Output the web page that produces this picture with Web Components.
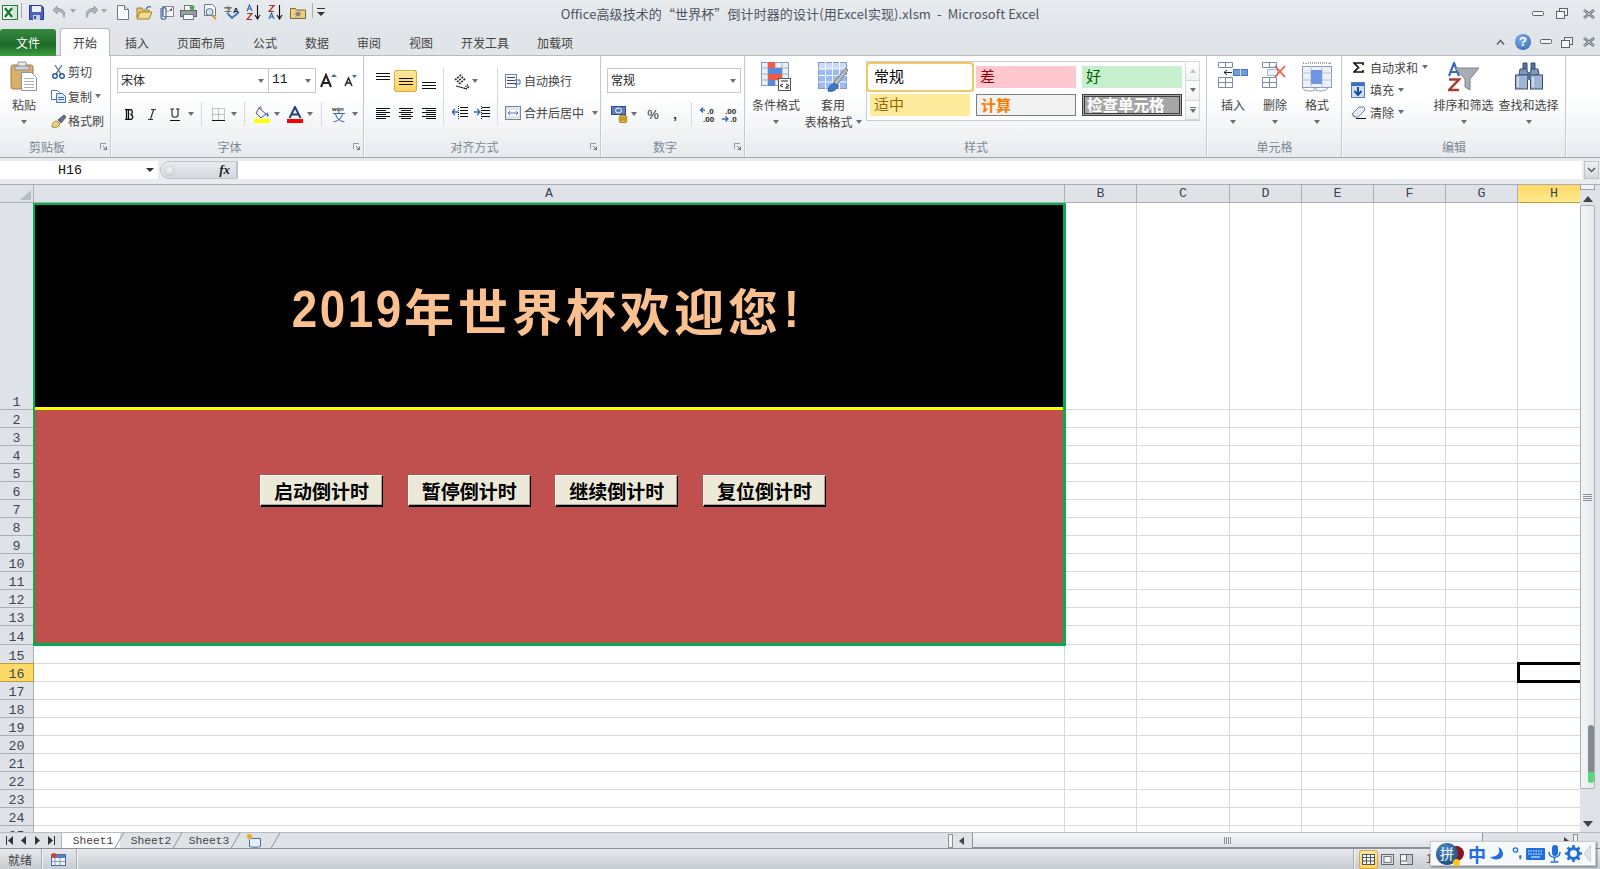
<!DOCTYPE html>
<html lang="zh">
<head>
<meta charset="utf-8">
<title>Microsoft Excel</title>
<style>
  html, body { margin: 0; height: 100%; overflow: hidden; background: #dfe3e8; }
  body { font: 12px "Noto Sans CJK SC", "Liberation Sans", sans-serif; color: #3c4650; display: flex; flex-direction: column; }
</style>
</head>
<body>
<xl-titlebar></xl-titlebar>
<xl-tabs></xl-tabs>
<xl-ribbon></xl-ribbon>
<xl-formula></xl-formula>
<xl-sheet>
  <xl-panel heading="年世界杯欢迎您">
    <xl-button>启动倒计时</xl-button>
    <xl-button>暂停倒计时</xl-button>
    <xl-button>继续倒计时</xl-button>
    <xl-button>复位倒计时</xl-button>
  </xl-panel>
</xl-sheet>
<xl-sheettabs></xl-sheettabs>
<xl-status></xl-status>
<xl-ime></xl-ime>

<script>
const svg = (w, h, body) => `<svg width="${w}" height="${h}" viewBox="0 0 ${w} ${h}" fill="none" style="display:block">${body}</svg>`;
const lines = (x, ys, w, c = "#111") => ys.map((y) => `<path d="M${x} ${y + .5}h${w}" stroke="${c}"/>`).join("");

const ICONS = {
  excel: svg(16, 15, `<rect x=".5" y=".5" width="15" height="14" fill="#f4faf5" stroke="#2b7d3f"/><path d="M10 1h5v13h-5" fill="#cfe8d3"/><path d="M3 3l7 9M10 3l-7 9" stroke="#1d7a35" stroke-width="2.4"/>`),
  save: svg(15, 15, `<path d="M.5.5h12l2 2v12H.5z" fill="#4f62bd" stroke="#2b3a86"/><rect x="3" y="1" width="9" height="6" fill="#eef1fa"/><rect x="4" y="10" width="7" height="5" fill="#c9cfe6"/><rect x="5" y="11" width="2" height="3" fill="#3a4a9a"/>`),
  undo: svg(16, 14, `<path d="M5 1L1 5l4 4V6.5c4 0 6 1 7 6 2-6-1-9-7-9z" fill="#aeb4bb" stroke="#9aa0a8"/>`),
  redo: svg(16, 14, `<path d="M11 1l4 4-4 4V6.5c-4 0-6 1-7 6-2-6 1-9 7-9z" fill="#aeb4bb" stroke="#9aa0a8"/>`),
  doc: svg(12, 15, `<path d="M.5.5h7l4 4v10H.5z" fill="#fbfcfe" stroke="#6d7a8c"/><path d="M7.5.5v4h4" fill="#dbe3ee" stroke="#6d7a8c"/>`),
  open: svg(17, 15, `<path d="M1 3h5l1 2h6v8H1z" fill="#e8c670" stroke="#a17f2e"/><path d="M1 14l3-7h12l-3 7z" fill="#f6dc8f" stroke="#a17f2e"/><path d="M10 4c1-2 3-3 5-2" stroke="#3d7ac4" stroke-width="1.4"/>`),
  mail: svg(17, 16, `<rect x="5.5" y="2.5" width="11" height="10" fill="#f5f7fb" stroke="#7c8aa3"/><path d="M6 3l5 5 5-5" stroke="#9aa6bb"/><rect x="13" y="5" width="2" height="2" fill="#c8433a"/><path d="M4 4v9c0 3 5 3 5 0V5c0-2-3-2-3 0v7" stroke="#4a6a9c" stroke-width="1.2"/>`),
  print: svg(17, 15, `<rect x="4.5" y=".5" width="8" height="5" fill="#fff" stroke="#777"/><rect x=".5" y="5.5" width="16" height="6" fill="#9aa0a8" stroke="#5d636b"/><rect x="3.5" y="9.5" width="10" height="5" fill="#f6f7f9" stroke="#777"/><circle cx="12" cy="2.5" r="2.5" fill="#55a85a"/>`),
  preview: svg(15, 16, `<path d="M1.5.5h8l3 3v8h-11z" fill="#fbfcfe" stroke="#6d7a8c"/><circle cx="6.5" cy="8" r="3.5" fill="#cfe3f5" stroke="#5b6d80"/><path d="M9 11l4 4" stroke="#c99a2e" stroke-width="2"/>`),
  spell: svg(17, 18, `<text x="0" y="9.5" font-size="8" font-family="Noto Sans CJK SC" fill="#222">字</text><text x="9" y="9.5" font-size="8" font-weight="700" font-family="Liberation Sans" fill="#222">A</text><path d="M4 11l4 4 7-6" stroke="#3e76c4" stroke-width="2"/>`),
  sortaz: svg(16, 16, `<path d="M1 7l2.5-6L6 7M2 5h3" stroke="#3c68b0" stroke-width="1.2"/><path d="M1 9.5h5l-5 6h5" stroke="#a4322e" stroke-width="1.2"/><path d="M11.5 1v13M9 11l2.5 4 2.5-4" stroke="#111" stroke-width="1.1"/>`),
  sortza: svg(16, 16, `<path d="M1 1.5h5l-5 6h5" stroke="#a4322e" stroke-width="1.2"/><path d="M1 15l2.5-6L6 15M2 13h3" stroke="#3c68b0" stroke-width="1.2"/><path d="M11.5 1v13M9 11l2.5 4 2.5-4" stroke="#111" stroke-width="1.1"/>`),
  folderstar: svg(16, 13, `<path d="M.5 2.5h5l1 1.5h9v8.5H.5z" fill="#ecd278" stroke="#7a6a3a"/><circle cx="8" cy="8" r="2" fill="#f4a022"/><path d="M8 4.5v7M4.5 8h7M5.5 5.5l5 5M10.5 5.5l-5 5" stroke="#5766b0" stroke-width=".7"/>`),
  customize: svg(8, 8, `<path d="M0 .5h8" stroke="#333"/><path d="M0 4h8L4 8z" fill="#333"/>`),
  paste: svg(28, 31, `<rect x="1" y="4" width="22" height="24" rx="2" fill="#dcae66" stroke="#a57f44"/><rect x="8" y="1" width="8" height="5" rx="1" fill="#e9ecef" stroke="#8a8f96"/><rect x="5" y="5" width="14" height="4" fill="#cfd3d8" stroke="#8a8f96"/><path d="M11.5 11.5h10l5 5v13h-15z" fill="#fff" stroke="#8a95a5"/>${lines(14, [17, 20, 23, 26], 10, "#a9b2bf")}`),
  cut: svg(13, 15, `<path d="M3 1l6 9M10 1L4 10" stroke="#5a6a80" stroke-width="1.3"/><circle cx="3" cy="12" r="2.3" stroke="#2a5db0" stroke-width="1.5"/><circle cx="10" cy="12" r="2.3" stroke="#2a5db0" stroke-width="1.5"/>`),
  copy: svg(15, 13, `<path d="M.5.5h6l2 2v7H.5z" fill="#fff" stroke="#4775b4"/><path d="M5.5 3.5h6l3 3v6h-9z" fill="#dce8f7" stroke="#4775b4"/>${lines(7, [7, 9], 6, "#4775b4")}`),
  brush: svg(16, 14, `<path d="M1 13c0-4 2-6 5-6l3 3c-1 3-4 4-8 3z" fill="#efd07a" stroke="#a58a3c"/><path d="M7 6l6-5 2 2-5 6z" fill="#6b6f87" stroke="#55586b"/>`),
  bold: svg(10, 11, `<path d="M1 .5h5c3 0 3 4.5 .5 5C9.5 6 9.5 10.5 6 10.5H1M2.5 1v9M4.5 1v9" stroke="#111" stroke-width="1.3"/>`),
  italic: svg(10, 11, `<path d="M4 .5h5M1 10.5h5M6.5 1l-3 9" stroke="#333" stroke-width="1.2"/>`),
  under: svg(10, 13, `<path d="M.5 1h3.5M6 1h3.5M2 1v6c0 3 6 3 6 0V1" stroke="#222" stroke-width="1.1"/><path d="M0 12.5h10" stroke="#111"/>`),
  border: svg(13, 13, `<path d="M.5.5h12v12M.5 6.5h12M6.5.5v12M.5.5v12" stroke="#8a8f96" stroke-dasharray="1 1"/><path d="M0 12.5h13" stroke="#111"/>`),
  fill: svg(16, 17, `<path d="M5 2l7 6-5 4-5-5z" fill="#eef2f7" stroke="#556"/><path d="M5 2c1-2 3-1 2 1" stroke="#556"/><path d="M13 6c2 2 2 4 1 5-2-1-2-3-1-5z" fill="#3c68b0"/><rect y="13" width="16" height="4" fill="#ff0"/>`),
  fontcolor: svg(16, 17, `<path d="M2.5 12L8 1l5.5 11M4.5 8.5h7" stroke="#23407e" stroke-width="2"/><rect y="13" width="16" height="4" fill="#f00"/>`),
  wen: svg(16, 18, `<text x="1" y="6" font-size="6" font-weight="700" font-family="Liberation Sans" fill="#333">wén</text><path d="M8 6v2M2 8.5h12M4.5 9c1 5 5 7 9 8M11.5 9c-1 5-5 7-9 8" stroke="#3c68b0" stroke-width="1.1"/>`),
  acup: svg(19, 15, `<path d="M1 14L6 2l5 12M3 10h6" stroke="#222" stroke-width="2"/><path d="M11 4l3-3 3 3z" fill="#3c68b0"/>`),
  acdn: svg(14, 13, `<path d="M1 12l3.5-8L8 12M2.5 9h4" stroke="#222" stroke-width="1.5"/><path d="M8 1h5l-2.5 3z" fill="#3c68b0"/>`),
  at: svg(14, 9, lines(0, [0, 3, 6], 14)),
  am: svg(14, 9, lines(0, [1, 4, 7], 14)),
  ab: svg(14, 9, lines(0, [2, 5, 8], 14)),
  jl: svg(14, 11, lines(0, [0, 4, 8], 14) + lines(0, [2, 6, 10], 10)),
  jc: svg(14, 11, lines(0, [0, 4, 8], 14) + lines(2, [2, 6, 10], 10)),
  jr: svg(14, 11, lines(0, [0, 4, 8], 14) + lines(4, [2, 6, 10], 10)),
  orient: svg(18, 18, `<path d="M2 8l7-6M4 10l7-6M6 12l7-6" stroke="#222" stroke-width="1.6" stroke-dasharray="2 1"/><path d="M3 14l11 3M14 17l-3-1" stroke="#222"/><path d="M12 14l4 2-2-4" stroke="#333"/>`),
  indl: svg(16, 14, lines(8, [1, 4, 7, 10], 8) + `<path d="M0 6h6M3 3L0 6l3 3" stroke="#3c68b0" stroke-width="1.3"/><path d="M6.5 0v14" stroke="#222" stroke-dasharray="1 1"/>`),
  indr: svg(16, 14, lines(8, [1, 4, 7, 10], 8) + `<path d="M0 6h6M3 3l3 3-3 3" stroke="#3c68b0" stroke-width="1.3"/><path d="M7.5 0v14" stroke="#222" stroke-dasharray="1 1"/>`),
  wrap: svg(16, 14, `<rect x=".5" y=".5" width="11" height="13" fill="#f3f5f8" stroke="#7a8696"/>${lines(2, [3, 6, 9], 8, "#445")}<path d="M10 6h5v4h-4M12 8l-2 2 2 2" stroke="#3c68b0"/>`),
  merge: svg(16, 14, `<rect x=".5" y=".5" width="15" height="13" fill="#dfe5ed" stroke="#7a8696"/><rect x="2" y="4" width="12" height="6" fill="#fff"/><path d="M3 7h10M5 5L3 7l2 2M11 5l2 2-2 2" stroke="#3c68b0" stroke-width=".9"/>`),
  currency: svg(17, 17, `<rect x=".5" y=".5" width="14" height="8" fill="#5d7fc0" stroke="#2d4d90"/><ellipse cx="7.5" cy="4.5" rx="3" ry="2.5" stroke="#fff"/><ellipse cx="12" cy="11" rx="4" ry="1.8" fill="#e8b93a" stroke="#a07c1e"/><ellipse cx="12" cy="13.5" rx="4" ry="1.8" fill="#e8b93a" stroke="#a07c1e"/><ellipse cx="12" cy="15.3" rx="4" ry="1.5" fill="#e8b93a" stroke="#a07c1e"/>`),
  incdec: svg(16, 19, `<path d="M0 5h5M3 2.5L.5 5 3 7.5" stroke="#3c68b0" stroke-width="1.3"/><text x="7" y="9" font-size="8" font-weight="700" font-family="Liberation Sans" fill="#222">.0</text><text x="3" y="17" font-size="8" font-weight="700" font-family="Liberation Sans" fill="#222">.00</text>`),
  decdec: svg(16, 19, `<text x="3" y="9" font-size="8" font-weight="700" font-family="Liberation Sans" fill="#222">.00</text><path d="M0 14h6M3.5 11.5L6 14l-2.5 2.5" stroke="#3c68b0" stroke-width="1.3"/><text x="8" y="17" font-size="8" font-weight="700" font-family="Liberation Sans" fill="#222">.0</text>`),
  cond: svg(30, 30, `<rect x=".5" y=".5" width="27" height="23" fill="#eaf0f8" stroke="#8a9bb5"/><path d="M7 0v24M14 0v24M21 0v24M0 6h28M0 12h28M0 18h28" stroke="#9fb0c8"/><rect x="7" y="0" width="7" height="6" fill="#ef5a4a"/><rect x="7" y="6" width="14" height="6" fill="#5c88d8"/><rect x="7" y="12" width="14" height="6" fill="#ef5a4a"/><rect x="7" y="18" width="7" height="6" fill="#5c88d8"/><rect x="17.5" y="16.5" width="12" height="12" fill="#fff" stroke="#555"/><path d="M20 19h7M22 22l-3 1.5 3 1.5M24 26h4M25 22l3 1.5-3 1.5" stroke="#222"/>`),
  table: svg(30, 30, `<rect x=".5" y=".5" width="28" height="26" fill="#cddcf5" stroke="#8a9bb5"/><rect x="1" y="7" width="27" height="19" fill="#9bbcf2"/><path d="M7.5 0v27M14.5 0v27M21.5 0v27M0 7h29M0 13.5h29M0 20h29" stroke="#f2f6fc"/><path d="M15 21l13-15 2 2-11 15z" fill="#b8bcc4" stroke="#777"/><path d="M10 29c1-6 4-8 8-7l2 2c-1 4-5 6-10 5z" fill="#3f78c9" stroke="#2f5fa5"/>`),
  insert: svg(31, 27, `<path d="M.5.5h14v5H.5zM7.5.5v5" fill="#fff" stroke="#7b8da6"/><path d="M.5 15.5h14v10H.5zM.5 20.5h14M7.5 15.5v10" fill="#fff" stroke="#7b8da6"/><rect x="15.5" y="7.5" width="14" height="6" fill="#6f9be0" stroke="#4c75b5"/><path d="M22.5 7v7" stroke="#cfe0f7"/><path d="M6 10.5h8M9 8l-3 2.5L9 13" stroke="#222"/>`),
  del: svg(26, 27, `<path d="M.5.5h14v5H.5zM7.5.5v5" fill="#fff" stroke="#7b8da6"/><path d="M.5 15.5h14v10H.5zM.5 20.5h14M7.5 15.5v10" fill="#fff" stroke="#7b8da6"/><rect x="5.5" y="7.5" width="10" height="6" fill="#eef3fb" stroke="#4c75b5" stroke-dasharray="1 1"/><path d="M13 4l10 11M23 4L13 15" stroke="#ee5b45" stroke-width="1.8"/>`),
  format: svg(31, 30, `<path d="M1 1h2M6 1h19M28 1h2M4 1v2M27 1v2" stroke="#444" stroke-dasharray="1 1"/><rect x=".5" y="4.5" width="29" height="21" fill="#eef2f8" stroke="#8a9bb5"/><path d="M9 4v22M20 4v22M0 11h30M0 18h30" stroke="#b7c4d8"/><rect x="9" y="8" width="11" height="14" fill="#6f94e4"/><path d="M1 26c0 2 3 3 7 3s6-1 7-3M12 26c1 2 3 3 6 3s7-1 8-3" stroke="#8a9bb5"/>`),
  sigma: svg(11, 11, `<path d="M10 3V1H1l4.5 4.5L1 10h9V8" stroke="#111" stroke-width="1.7"/>`),
  filldown: svg(14, 16, `<rect x=".5" y=".5" width="13" height="15" fill="#cfe0f5" stroke="#5a80bb"/><rect x="1" y="1" width="12" height="3" fill="#3e6fbe"/><path d="M7 5v7M3.5 9L7 13l3.5-4" stroke="#1f4c9c" stroke-width="2"/>`),
  eraser: svg(15, 13, `<path d="M1 8l7-7h5l1 3-7 7H3z" fill="#e6ebf2" stroke="#7b8696"/><path d="M1 8l3 3" stroke="#7b8696"/><path d="M5 12.5h10" stroke="#111"/>`),
  sort: svg(31, 30, `<path d="M1 14L6 1l5 13M3 10h6" stroke="#3d6ab5" stroke-width="2.2"/><path d="M1 17.5h10L1 28h10" stroke="#a83a30" stroke-width="2.5"/><path d="M7 6h24l-9 11v11l-5-3v-8z" fill="#a7adb4" stroke="#7e848b"/>`),
  find: svg(28, 28, `<path d="M8 1h4v6H8zM16 1h4v6h-4z" fill="#56729c" stroke="#3a4f70"/><path d="M5 7h7l1 6H4zM16 7h7l1 6h-9z" fill="#7f98bd" stroke="#3a4f70"/><rect x=".5" y="13" width="12" height="14" fill="#9fb5d4" stroke="#3a4f70"/><rect x="15.5" y="13" width="12" height="14" fill="#9fb5d4" stroke="#3a4f70"/><rect x="12" y="10" width="4" height="8" fill="#5a6f8e"/><path d="M3 15v10M18 15v10" stroke="#dfe8f4" stroke-width="1.5"/>`),
  launcher: svg(7, 7, `<path d="M.5 6V.5H6" stroke="#8e9aa6"/><path d="M3 3l3.5 3.5M6.5 3.5v3h-3" stroke="#6b7886"/>`),
  newsheet: svg(15, 15, `<path d="M3.5 5.5h11v8c-3 1-8 1-11 0z" fill="#e8eef6" stroke="#3f6fa8"/><circle cx="3.5" cy="3.5" r="2.5" fill="#f0a530" stroke="#e4c05a" stroke-width="1"/>`),
  statussheet: svg(15, 13, `<rect x=".5" y="1.5" width="14" height="11" fill="#f2f6fb" stroke="#4a6fa8"/><rect x="1" y="2" width="13" height="3" fill="#5a83c4"/><path d="M4 5v7M9 5v7M1 8.5h13" stroke="#7ea0d0"/><circle cx="3" cy="2.5" r="2.5" fill="#d8432f"/>`),
  vnormal: svg(13, 11, `<rect x=".5" y=".5" width="12" height="10" fill="#fff" stroke="#555"/><path d="M4.5 0v11M8.5 0v11M0 3.5h13M0 7h13" stroke="#555"/>`),
  vlayout: svg(13, 11, `<rect x=".5" y=".5" width="12" height="10" fill="#d9dde2" stroke="#666"/><rect x="3" y="2.5" width="7" height="6" fill="#f6f7f9" stroke="#777"/>`),
  vbreak: svg(13, 11, `<rect x=".5" y=".5" width="12" height="10" fill="#f3f4f6" stroke="#666"/><path d="M6.5 0v7M0 7h13" stroke="#666"/><rect x="7" y="1" width="5" height="9" fill="#c6cbd1"/>`)
};
const ico = (n) => ICONS[n];

class XlTitlebar extends HTMLElement {
  connectedCallback() {
    this.attachShadow({ mode: "open" });
    const qat = [["excel", 2, 16], ["save", 29, 15], ["undo", 52, 16], ["redo", 83, 16], ["doc", 117, 12], ["open", 136, 17], ["mail", 157, 17], ["print", 180, 17], ["preview", 203, 15], ["spell", 224, 17], ["sortaz", 246, 16], ["sortza", 268, 16], ["folderstar", 290, 16], ["customize", 317, 8]];
    let x = 0;
    const items = qat.map(([n, at, w]) => {
      const m = at - x; x = at + w;
      return `<span style="margin-left:${m}px">${ico(n)}</span>`;
    }).join("");
    this.shadowRoot.innerHTML = `
      <style>
        :host { display: block; height: 28px; background: linear-gradient(#e9ecef, #e1e4e8); }
        .bar { display: grid; grid-template-columns: 1fr auto 1fr; align-items: center; height: 28px; }
        .qat { display: flex; align-items: center; position: relative; margin-top: -4px; }
        .car { position: absolute; width: 0; border: 3px solid transparent; border-top: 4px solid #a2a7ad; border-bottom: 0; }
        .sep { position: absolute; top: 0; width: 1px; height: 15px; background: #a9aeb4; }
        .title { font-size: 13px; letter-spacing: .1px; color: #4d5560; white-space: pre; margin-top: -2px; }
        .win { display: flex; justify-content: flex-end; padding-right: 4px; align-items: center; margin-top: -1px; }
      </style>
      <div class="bar">
        <div class="qat">${items}
          <i class="sep" style="left:21px"></i><i class="sep" style="left:312px"></i>
          <i class="car" style="left:70px;top:6px"></i><i class="car" style="left:101px;top:6px"></i>
        </div>
        <div class="title">Office高级技术的“世界杯”倒计时器的设计(用Excel实现).xlsm  -  Microsoft Excel</div>
        <div class="win"><xl-winbtns gap="12" closegap="14"></xl-winbtns></div>
      </div>`;
  }
}

class XlWinbtns extends HTMLElement {
  connectedCallback() {
    this.attachShadow({ mode: "open" });
    const gap = this.getAttribute("gap");
    const closeGap = this.getAttribute("closegap");
    this.shadowRoot.innerHTML = `
      <style>:host { display: flex; align-items: center; }</style>
      ${svg(12, 6, `<rect x=".5" y=".5" width="11" height="4" rx="1" fill="#f4f5f7" stroke="#5c636b"/>`)}
      <span style="margin-left:${gap}px">${svg(12, 11, `<rect x="3.5" y=".5" width="8" height="7" fill="#f4f5f7" stroke="#5c636b"/><rect x=".5" y="3.5" width="8" height="7" fill="#f4f5f7" stroke="#5c636b"/>`)}</span>
      <span style="margin-left:${closeGap}px">${svg(14, 10, `<path d="M2 1l10 8M12 1L2 9" stroke="#5c636b" stroke-width="2.6"/><path d="M2 1l10 8M12 1L2 9" stroke="#f4f5f7" stroke-width=".8"/>`)}</span>`;
  }
}

class XlTabs extends HTMLElement {
  connectedCallback() {
    this.attachShadow({ mode: "open" });
    const names = ["插入", "页面布局", "公式", "数据", "审阅", "视图", "开发工具", "加载项"];
    this.shadowRoot.innerHTML = `
      <style>
        :host { display: flex; height: 28px; align-items: flex-end; background: #e1e4e8; box-shadow: inset 0 -1px 0 #b6babf; position: relative; }
        .file { width: 56px; height: 27px; display: flex; align-items: center; justify-content: center; color: #fff; border-radius: 3px 3px 0 0;
          background: linear-gradient(#348a3e, #1f6b2c 60%, #3c9e3f); margin-right: 4px; }
        .home { width: 48px; display: flex; align-items: center; justify-content: center; background: linear-gradient(#fff, #fbfcfd);
          border: 1px solid #b6babf; border-bottom: 0; border-radius: 3px 3px 0 0; height: 27px; color: #3c3c3c; z-index: 1; margin-right: 1px; }
        .tab { height: 27px; padding: 0 14px; display: flex; align-items: center; color: #444; }
        .right { margin-left: auto; height: 28px; display: flex; align-items: center; padding: 0 4px 0 0; gap: 10px; }
        .help { width: 16px; height: 16px; border-radius: 50%; background: radial-gradient(circle at 40% 30%, #7fb0ea, #2f62b4); color: #fff; font: 700 13px/16px "Liberation Sans", sans-serif; text-align: center; }
        xl-winbtns { margin-left: -1px; }
      </style>
      <div class="file">文件</div>
      <div class="home">开始</div>
      ${names.map((n) => `<div class="tab">${n}</div>`).join("")}
      <div class="right">
        <span>${svg(9, 7, `<path d="M1 5.5l3.5-4 3.5 4" stroke="#5c636b" stroke-width="1.5"/>`)}</span>
        <div class="help">?</div>
        <xl-winbtns gap="9" closegap="9"></xl-winbtns>
      </div>`;
  }
}

class RbGroup extends HTMLElement {
  connectedCallback() {
    this.attachShadow({ mode: "open" });
    const w = this.getAttribute("width");
    const has = this.hasAttribute("launcher");
    const launcher = has ? `<span class="lau">${ico("launcher")}</span>` : "";
    this.shadowRoot.innerHTML = `
      <style>
        :host { display: flex; flex-direction: column; flex: none; width: ${w}px; box-sizing: border-box; border-right: 1px solid #c4c9cf; box-shadow: 1px 0 0 #fbfcfd; margin-right: 1px; position: relative; }
        .body { flex: 1; display: flex; min-height: 0; }
        .label { height: 20px; line-height: 20px; text-align: center; color: #7c8894; padding-right: ${has ? 16 : 0}px; }
        .lau { position: absolute; right: 3px; bottom: 7px; }
      </style>
      <div class="body"><slot></slot></div>
      <div class="label">${this.getAttribute("label")}</div>
      ${launcher}`;
  }
}

class XlRibbon extends HTMLElement {
  connectedCallback() {
    this.attachShadow({ mode: "open" });
    const c = (w, n) => `<span class="cell" style="width:${w}px">${ico(n)}</span>`;
    const car = (ml = 2) => `<i class="car" style="margin-left:${ml}px"></i>`;
    const big = (w, n, a, b) => `<div class="big" style="width:${w}px"><span class="bi">${ico(n)}</span><span class="bl">${a}</span><span class="bl">${b || ""}</span></div>`;
    const vshift = (w, n, dy, extra = "") => `<span class="cell ${extra}" style="width:${w}px"><span style="transform:translateY(${dy}px)">${ico(n)}</span></span>`;
    this.shadowRoot.innerHTML = `
      <style>
        :host { display: flex; height: 101px; background: linear-gradient(#fff 40%, #f1f3f5 75%, #e7eaee); border-bottom: 1px solid #a2a6ac; color: #444; box-sizing: content-box; }
        .cell { display: inline-flex; align-items: center; justify-content: center; flex: none; height: 100%; }
        .car { display: inline-block; flex: none; width: 0; height: 0; border: 3px solid transparent; border-top: 4px solid #6a6f75; border-bottom: 0; }
        .row { display: flex; align-items: center; white-space: nowrap; }
        .row > .tx, .combo > span { position: relative; top: -1px; }
        .sep { width: 1px; flex: none; align-self: stretch; background: #d6d9dd; }
        .col { display: flex; flex-direction: column; }
        .combo { display: flex; align-items: center; box-sizing: border-box; height: 25px; background: #fff; border: 1px solid #c5c9ce; padding: 0 4px 0 3px; color: #222; font-size: 12px; flex: none; justify-content: space-between; }
        .big { display: flex; flex-direction: column; align-items: center; flex: none; padding-top: 6px; white-space: nowrap; }
        .bi { height: 28px; display: flex; align-items: flex-start; margin-bottom: 6px; }
        .bl { height: 17px; line-height: 17px; display: flex; align-items: center; justify-content: center; }
        .on { background: linear-gradient(#ffe9a6, #ffd35c); box-shadow: inset 0 0 0 1px #d9a94a; border-radius: 3px; }
        .gallery { width: 334px; height: 60px; box-sizing: border-box; border: 1px solid #c9ccd1; margin: 5px 0 0 3px; display: flex; background: #fff; flex: none; }
        .styles { display: grid; grid-template-columns: repeat(3, 100px); grid-auto-rows: 22px; gap: 6px; padding: 4px 0 0 3px; }
        .st { font-size: 15px; line-height: 19px; padding-left: 4px; box-sizing: border-box; white-space: nowrap; overflow: hidden; }
        .scroll { margin-left: 3px; width: 15px; display: flex; flex-direction: column; }
        .scroll span { flex: 1; display: flex; align-items: center; justify-content: center; border: 1px solid #d4d7db; margin: -1px -1px 0 0; background: linear-gradient(#fff, #f0f2f4); flex-direction: column; gap: 1px; }
      </style>

      <rb-group width="111" label="剪贴板" launcher>
        <div class="big" style="width:28px;margin:0 0 0 10px;padding-top:5px"><span class="bi" style="height:30px;margin-bottom:5px">${ico("paste")}</span><span class="bl">粘贴</span><span class="bl"><i class="car"></i></span></div>
        <div class="col" style="margin-left:11px;padding-top:3px">
          <div class="row" style="height:25px"><span class="cell" style="width:19px">${ico("cut")}</span>剪切</div>
          <div class="row" style="height:24px"><span class="cell" style="width:19px">${ico("copy")}</span>复制${car(3)}</div>
          <div class="row" style="height:25px"><span class="cell" style="width:19px">${ico("brush")}</span>格式刷</div>
        </div>
      </rb-group>

      <rb-group width="252" label="字体" launcher>
        <div class="col" style="padding:12px 0 0 5px">
          <div class="row">
            <div class="combo" style="width:152px"><span>宋体</span>${car(0)}</div>
            <div class="combo" style="width:47px;border-left:0"><span style="font:13px 'Liberation Mono',monospace">11</span>${car(0)}</div>
            <span class="cell" style="width:27px;height:25px">${ico("acup")}</span>
            <span class="cell" style="width:16px;height:25px">${ico("acdn")}</span>
          </div>
          <div class="row" style="height:24px;margin-top:9px">
            ${c(23, "bold")}${c(23, "italic")}${c(23, "under")}<span class="cell" style="width:10px">${car(0)}</span>
            <i class="sep" style="margin:0 5px"></i>
            ${c(22, "border")}<span class="cell" style="width:10px">${car(0)}</span>
            <i class="sep" style="margin:0 5px"></i>
            ${c(24, "fill")}<span class="cell" style="width:6px">${car(0)}</span>
            <span class="cell" style="width:24px;margin-left:3px">${ico("fontcolor")}</span><span class="cell" style="width:6px">${car(0)}</span>
            <i class="sep" style="margin:0 5px 0 8px"></i>
            ${c(24, "wen")}<span class="cell" style="width:7px">${car(0)}</span>
          </div>
        </div>
      </rb-group>

      <rb-group width="236" label="对齐方式" launcher>
        <div class="col" style="padding:14px 0 0 6px;width:69px">
          <div class="row" style="height:22px">${vshift(23, "at", -4)}${vshift(23, "am", 0, "on")}${vshift(23, "ab", 3)}</div>
          <div class="row" style="height:24px;margin-top:9px">${c(23, "jl")}${c(23, "jc")}${c(23, "jr")}</div>
        </div>
        <i class="sep" style="margin:12px 0 12px 3px"></i>
        <div class="col" style="padding-top:14px;width:53px">
          <div class="row" style="height:22px;padding-left:9px">${ico("orient")}${car(1)}</div>
          <div class="row" style="height:24px;margin-top:9px;padding-left:8px">${ico("indl")}<span style="width:6px"></span>${ico("indr")}</div>
        </div>
        <i class="sep" style="margin:12px 0"></i>
        <div class="col" style="padding:14px 0 0 7px">
          <div class="row" style="height:22px;gap:3px">${ico("wrap")}<span class="tx">自动换行</span></div>
          <div class="row" style="height:24px;gap:3px;margin-top:9px">${ico("merge")}<span class="tx">合并后居中</span>${car(5)}</div>
        </div>
      </rb-group>

      <rb-group width="143" label="数字" launcher>
        <div class="col" style="padding:12px 0 0 5px">
          <div class="combo" style="width:134px"><span>常规</span>${car(0)}</div>
          <div class="row" style="height:24px;margin-top:9px">
            ${c(24, "currency")}<span class="cell" style="width:6px">${car(0)}</span>
            <span class="cell" style="width:24px;margin-left:4px;font:13px 'Liberation Sans',sans-serif;color:#222">%</span>
            <span class="cell" style="width:20px;font:700 13px 'Liberation Sans',sans-serif;color:#222">,</span>
            <i class="sep" style="margin:0 5px 0 6px"></i>
            ${c(22, "incdec")}${c(22, "decdec")}
          </div>
        </div>
      </rb-group>

      <rb-group width="461" label="样式">
        <div class="big" style="width:52px;margin-left:4px"><span class="bi">${ico("cond")}</span><span class="bl">条件格式</span><span class="bl"><i class="car"></i></span></div>
        <div class="big" style="width:60px;margin-left:1px"><span class="bi">${ico("table")}</span><span class="bl">套用</span><span class="bl">表格格式${car(3)}</span></div>
        <div class="gallery">
          <div class="styles">
            <div class="st" style="background:#fff;color:#000;box-shadow:0 0 0 2px #fff,0 0 0 3px #f3c766,0 0 0 4px #f3c766;border-radius:1px">常规</div>
            <div class="st" style="background:#ffc7ce;color:#9c0006">差</div>
            <div class="st" style="background:#c6efce;color:#006100">好</div>
            <div class="st" style="background:#ffeb9c;color:#9c6500">适中</div>
            <div class="st" style="background:#f2f2f2;color:#fa7d00;font-weight:700;border:1px solid #7f7f7f">计算</div>
            <div class="st" style="background:#a5a5a5;color:#fff;font-weight:700;font-size:15.5px;border:3px double #3f3f3f;line-height:15px;padding-left:2px">检查单元格</div>
          </div>
          <div class="scroll">
            <span><i class="car" style="transform:rotate(180deg);opacity:.4"></i></span>
            <span><i class="car"></i></span>
            <span><b style="width:6px;height:1px;background:#6a6f75"></b><i class="car"></i></span>
          </div>
        </div>
      </rb-group>

      <rb-group width="134" label="单元格">
        <div class="big" style="width:42px;margin-left:4px"><span class="bi">${ico("insert")}</span><span class="bl">插入</span><span class="bl"><i class="car"></i></span></div>
        <div class="big" style="width:42px"><span class="bi">${ico("del")}</span><span class="bl">删除</span><span class="bl"><i class="car"></i></span></div>
        <div class="big" style="width:42px"><span class="bi">${ico("format")}</span><span class="bl">格式</span><span class="bl"><i class="car"></i></span></div>
      </rb-group>

      <rb-group width="223" label="编辑">
        <div class="col" style="margin-left:7px;width:81px;flex:none">
          <div class="row" style="height:22px"><span class="cell" style="width:20px;padding-right:4px;box-sizing:border-box">${ico("sigma")}</span>自动求和${car(4)}</div>
          <div class="row" style="height:23px"><span class="cell" style="width:20px;padding-right:4px;box-sizing:border-box">${ico("filldown")}</span>填充${car(4)}</div>
          <div class="row" style="height:22px"><span class="cell" style="width:20px;padding-right:4px;box-sizing:border-box">${ico("eraser")}</span>清除${car(4)}</div>
        </div>
        ${big(65, "sort", "排序和筛选", '<i class="car"></i>')}
        ${big(65, "find", "查找和选择", '<i class="car"></i>')}
      </rb-group>`;
  }
}

class XlFormula extends HTMLElement {
  connectedCallback() {
    this.attachShadow({ mode: "open" });
    this.shadowRoot.innerHTML = `
      <style>
        :host { display: flex; height: 27px; box-sizing: border-box; padding: 3px 0 5px; background: #e9ecef; border-bottom: 1px solid #a9aeb4; }
        .name { width: 158px; background: #fff; display: flex; align-items: center; box-sizing: border-box; font: 13.3px "Liberation Mono", monospace; color: #111; padding-left: 58px; }
        .name i { margin-left: 64px; border: 4px solid transparent; border-top: 4px solid #333; border-bottom: 0; }
        .fx { width: 77px; margin-left: 2px; box-sizing: border-box; background: linear-gradient(#e8ebee, #d5d9de); border: 1px solid #bfc4ca; border-radius: 10px 0 0 10px; display: flex; align-items: center; justify-content: space-between; padding: 0 6px 0 3px; font: italic 700 13px "Liberation Serif", serif; color: #222; }
        .fx b { width: 11px; height: 11px; border-radius: 50%; background: radial-gradient(circle at 50% 40%, #f4f5f7, #bcc1c7); }
        .input { flex: 1; background: #fff; border-left: 1px solid #c0c4c9; }
        .more { width: 15px; margin: 0 1px 0 2px; background: linear-gradient(#eef0f3, #d5d9de); border: 1px solid #bfc4ca; box-sizing: border-box; display: flex; align-items: center; justify-content: center; }
      </style>
      <div class="name">H16<i></i></div>
      <div class="fx"><b></b>fx</div>
      <div class="input"></div>
      <div class="more">${svg(9, 6, `<path d="M1 1l3.5 3.5L8 1" stroke="#555" stroke-width="1.4"/>`)}</div>`;
  }
}

class XlSheet extends HTMLElement {
  connectedCallback() {
    this.attachShadow({ mode: "open" });
    const cols = ["A", "B", "C", "D", "E", "F", "G", "H"];
    const rowH = [207];
    for (let r = 2; r <= 25; r++) rowH.push(r === 14 || r === 15 ? 19 : 18);
    let cells = `<div class="corner">${svg(11, 10, `<path d="M11 0v10H0z" fill="#b9bec4"/>`)}</div>`;
    cols.forEach((c) => { cells += `<div class="ch${c === "H" ? " sel" : ""}">${c}</div>`; });
    rowH.forEach((h, i) => {
      const r = i + 1;
      cells += `<div class="rh${r === 16 ? " sel" : ""}"><span>${r}</span></div>`;
      cols.forEach((c, j) => {
        if (j === 0 && r <= 14) return;
        cells += `<div class="cell${c === "H" && r === 16 ? " active" : ""}"></div>`;
      });
    });
    this.shadowRoot.innerHTML = `
      <style>
        :host { display: flex; height: 647px; flex: none; overflow: hidden; background: #fff; }
        .grid { width: 1580px; flex: none; overflow: hidden; display: grid; align-content: start;
          grid-template-columns: 34px 1031px 72px 93px 72px 72px 72px 72px 72px;
          grid-template-rows: 18px ${rowH.map((h) => h + "px").join(" ")}; }
        .corner, .ch, .rh { background: #dfe3e8; box-sizing: border-box; font: 13.3px "Liberation Mono", monospace; color: #3d4650; }
        .corner { border-right: 1px solid #a9aeb4; border-bottom: 1px solid #a9aeb4; display: flex; align-items: flex-end; justify-content: flex-end; padding: 0 2px 2px 0; }
        .ch { border-right: 1px solid #a9aeb4; border-bottom: 1px solid #a9aeb4; text-align: center; line-height: 17px; }
        .ch.sel { background: linear-gradient(#ffd965, #fde98f); border-bottom: 1px solid #c29a30; border-right: 0; }
        .rh { border-right: 1px solid #a9aeb4; border-bottom: 1px solid #a9aeb4; display: flex; align-items: flex-end; justify-content: center; line-height: 12px; }
        .rh.sel { background: #ffd966; border: 1px solid #c6993a; border-left: 0; margin-top: -1px; }
        .cell { box-sizing: border-box; border-right: 1px solid #d9d9d9; border-bottom: 1px solid #d9d9d9; }
        .active { border: 3px solid #000; margin: -2px 0 -1px -1px; z-index: 2; }
        .merged { grid-column: 2; grid-row: 2 / span 14; margin: 0 -1px -1px -1px; z-index: 1; display: flex; }
        .vs { width: 20px; flex: none; background: #dfe3e8; position: relative; display: flex; flex-direction: column; align-items: center; }
        .vs .split { width: 15px; height: 5px; margin: 0 5px 0 0; border: 1px solid #9aa0a7; box-sizing: border-box; background: #f3f4f6; border-top: 0; }
        .arrow { width: 0; height: 0; border: 5px solid transparent; margin-right: 4px; }
        .up { border-bottom: 6px solid #444; border-top: 0; margin-top: 6px; }
        .thumb { width: 15px; height: 584px; margin: 3px 5px 0 0; box-sizing: border-box; border: 1px solid #a9afb6; border-radius: 2px; background: linear-gradient(90deg, #f4f5f7, #e6e9ed); display: flex; align-items: center; justify-content: center; flex: none; position: relative; }
        .thumb b { width: 9px; height: 7px; background: repeating-linear-gradient(#8a9097 0 1px, transparent 1px 2px); }
        .streak { position: absolute; right: 0; bottom: 5px; width: 6px; height: 58px; border-radius: 3px; background: linear-gradient(#838b94 0 70%, #7f8c86 80%, #57dd7a 82%, #55d678); }
        .down { border-top: 6px solid #444; border-bottom: 0; margin-top: auto; margin-bottom: 5px; }
      </style>
      <div class="grid">
        ${cells}
        <div class="merged"><slot></slot></div>
      </div>
      <div class="vs">
        <div class="split"></div>
        <i class="arrow up"></i>
        <div class="thumb"><b></b><i class="streak"></i></div>
        <i class="arrow down"></i>
      </div>`;
  }
}

class XlPanel extends HTMLElement {
  connectedCallback() {
    this.attachShadow({ mode: "open" });
    this.shadowRoot.innerHTML = `
      <style>
        :host { display: flex; flex-direction: column; flex: 1; box-sizing: border-box; border: solid #00b050; border-width: 2px 3px 3px 2px; }
        .head { height: 205px; flex: none; box-sizing: border-box; background: #000; border-bottom: 3px solid #ff0; display: flex; align-items: center; justify-content: center; padding: 5px 5px 0 0; color: #fac090; font-family: "Noto Sans CJK SC", sans-serif; font-weight: 700; font-size: 50px; white-space: nowrap; }
        .d { font-family: "Liberation Sans", sans-serif; font-size: 52px; display: inline-block; width: 28px; text-align: center; transform: scaleX(.88); }
        .bang { width: 23px; }
        .z { display: inline-block; width: 54px; text-align: center; }
        .body { flex: 1; background: #c0504d; display: flex; gap: 24.7px; padding: 65px 0 0 225px; align-items: flex-start; }
      </style>
      <div class="head">
        ${"2019".split("").map((c) => `<span class="d">${c}</span>`).join("")}${this.getAttribute("heading").split("").map((c) => `<span class="z">${c}</span>`).join("")}<span class="d bang">!</span>
      </div>
      <div class="body"><slot></slot></div>`;
  }
}

class XlButton extends HTMLElement {
  connectedCallback() {
    this.attachShadow({ mode: "open" });
    this.shadowRoot.innerHTML = `
      <style>
        :host { display: flex; align-items: center; justify-content: center; width: 123px; height: 32px; box-sizing: border-box; background: #ece9d8; color: #000;
          border-top: 1px solid #fff; border-left: 1px solid #fff; border-right: 1px solid #000; border-bottom: 2px solid #000; box-shadow: inset -1px -1px 0 #aca899;
          font: 700 19px "Noto Sans CJK SC", sans-serif; white-space: nowrap; }
      </style>
      <slot></slot>`;
  }
}

class XlSheettabs extends HTMLElement {
  connectedCallback() {
    this.attachShadow({ mode: "open" });
    this.shadowRoot.innerHTML = `
      <style>
        :host { display: flex; height: 17px; flex: none; background: #dfe3e8; border-bottom: 1px solid #8d9298; box-sizing: border-box; border-top: 1px solid #b7bcc2; font: 11.3px "Liberation Mono", monospace; color: #444; align-items: stretch; overflow: hidden; }
        .nav { width: 62px; flex: none; box-sizing: border-box; display: flex; align-items: center; justify-content: space-between; border-right: 1px solid #b0b5bb; padding: 0 6px; }
        .t { width: 58px; flex: none; box-sizing: border-box; padding: 1px 0 0 4px; display: flex; align-items: center; justify-content: center; position: relative; }
        .t::after { content: ""; position: absolute; right: 0; top: 0; bottom: 0; width: 0; border-right: 1px solid #8d9298; transform: skewX(-30deg); }
        .t.on { background: #fff; margin-top: -1px; }
        .new { width: 40px; padding: 0 5px 0 0; }
        .strip { width: 672px; flex: none; }
        .h { flex: 1; display: flex; align-items: center; position: relative; }
        .sp { width: 5px; height: 14px; background: #f3f4f6; border: 1px solid #8d9298; box-sizing: border-box; margin-right: 6px; flex: none; }
        .la { width: 0; border: 4px solid transparent; border-right: 5px solid #444; border-left: 0; margin-right: 8px; }
        .th { width: 511px; height: 15px; box-sizing: border-box; background: linear-gradient(#f5f6f8, #dfe3e8); border: 1px solid #8d9298; border-top: 0; display: flex; align-items: center; justify-content: center; flex: none; }
        .th b { width: 7px; height: 7px; background: repeating-linear-gradient(90deg, #8a9097 0 1px, transparent 1px 2px); }
        .ra { width: 0; border: 4px solid transparent; border-left: 5px solid #444; border-right: 0; margin-left: 81px; }
        .sp2 { width: 5px; height: 14px; background: #f3f4f6; border: 1px solid #8d9298; box-sizing: border-box; margin-left: 4px; flex: none; }
        .corner { width: 20px; flex: none; background: #dfe3e8; margin-left: 1px; }
      </style>
      <div class="nav">
        ${svg(7, 9, `<path d="M.5 0v9" stroke="#333"/><path d="M7 0v9L2 4.5z" fill="#333"/>`)}
        ${svg(5, 9, `<path d="M5 0v9L0 4.5z" fill="#333"/>`)}
        ${svg(5, 9, `<path d="M0 0v9l5-4.5z" fill="#333"/>`)}
        ${svg(7, 9, `<path d="M6.5 0v9" stroke="#333"/><path d="M0 0v9l5-4.5z" fill="#333"/>`)}
      </div>
      <div class="t on">Sheet1</div><div class="t">Sheet2</div><div class="t">Sheet3</div>
      <div class="t new">${ico("newsheet")}</div>
      <div class="strip"></div>
      <div class="h"><i class="sp"></i><i class="la"></i><div class="th"><b></b></div><i class="ra"></i><i class="sp2"></i></div>
      <div class="corner"></div>`;
  }
}

class XlStatus extends HTMLElement {
  connectedCallback() {
    this.attachShadow({ mode: "open" });
    this.shadowRoot.innerHTML = `
      <style>
        :host { display: flex; height: 21px; flex: 1; align-items: center; background: linear-gradient(#e6e8ec, #c8cdd2); color: #444; }
        .s { width: 1px; height: 100%; background: #a9aeb4; box-shadow: 1px 0 0 #f2f3f5; flex: none; }
        .on { width: 19px; height: 19px; background: linear-gradient(#ffe9a6, #ffd35c); box-shadow: inset 0 0 0 1px #d9a94a; border-radius: 3px; display: flex; align-items: center; justify-content: center; margin-left: 5px; }
        .v { margin-left: 6px; }
        .pct { margin-left: 13px; font: 12px "Liberation Sans", sans-serif; color: #555; }
      </style>
      <span style="margin-left:8px">就绪</span>
      <i class="s" style="margin-left:9px"></i>
      <span style="margin-left:9px">${ico("statussheet")}</span>
      <i class="s" style="margin-left:10px"></i>
      <i class="s" style="margin-left:1276px"></i>
      <span class="on">${ico("vnormal")}</span>
      <span class="v" style="margin-left:3px">${ico("vlayout")}</span>
      <span class="v">${ico("vbreak")}</span>
      <span class="pct">1</span>`;
  }
}

class XlIme extends HTMLElement {
  connectedCallback() {
    this.attachShadow({ mode: "open" });
    this.shadowRoot.innerHTML = `
      <style>
        :host { position: absolute; left: 1430px; top: 841px; width: 166px; height: 25px; box-sizing: border-box; background: #f7f8f9; border: 1px solid #c9cdd2; box-shadow: 1px 1px 2px rgba(0,0,0,.45); display: flex; align-items: center; color: #1f6fdc; }
        .logo { width: 22px; height: 22px; margin-left: 5px; border-radius: 50%; background: radial-gradient(circle at 40% 30%, #4f8dc8, #123a66); color: #fff; font-size: 14px; line-height: 21px; text-align: center; position: relative; z-index: 1; flex: none; }
        .red { width: 15px; height: 15px; border-radius: 50%; background: #8c1020; margin-left: -9px; flex: none; }
        .dot { position: absolute; right: -2px; bottom: -1px; width: 7px; height: 7px; border-radius: 50%; background: #ffc516; }
        .zh { font: 700 18px/1 "Noto Sans CJK SC", sans-serif; margin-left: 4px; }
        .g { flex: none; }
      </style>
      <div class="logo">拼<i class="dot"></i></div><div class="red"></div>
      <span class="zh">中</span>
      <span class="g" style="margin-left:3px">${svg(15, 15, `<path d="M9 1c3 4 1 10-8 10 4 4 13 3 13-3 0-3-2-6-5-7z" fill="#1f6fdc"/>`)}</span>
      <span class="g" style="margin-left:8px">${svg(11, 15, `<circle cx="3.5" cy="4" r="2.2" stroke="#1f6fdc" stroke-width="1.3"/><path d="M8.5 9c1.5 0 1.5 4-1 5 .5-1 .3-2-.5-3 0-1 .5-2 1.5-2z" fill="#1f6fdc"/>`)}</span>
      <span class="g" style="margin-left:3px">${svg(19, 12, `<rect width="19" height="12" rx="1" fill="#1f6fdc"/><path d="M2 3h15M2 6h15" stroke="#fff" stroke-dasharray="1.5 1"/><path d="M5 9h9" stroke="#fff"/>`)}</span>
      <span class="g" style="margin-left:3px">${svg(13, 18, `<rect x="4" y="0" width="6" height="11" rx="3" fill="#1f6fdc"/><path d="M1 7c0 7 11 7 11 0M6.5 12v4M2.5 17h8" stroke="#1f6fdc" stroke-width="1.5"/>`)}</span>
      <span class="g" style="margin-left:4px">${svg(17, 17, `<circle cx="8.5" cy="8.5" r="5" stroke="#1f6fdc" stroke-width="3"/><path d="M8.5 0v3M8.5 14v3M0 8.5h3M14 8.5h3M2.5 2.5l2 2M12.5 12.5l2 2M14.5 2.5l-2 2M4.5 12.5l-2 2" stroke="#1f6fdc" stroke-width="2.5"/>`)}</span>
      <span class="g" style="margin-left:2px">${svg(7, 17, `<path d="M7 0v17L0 8.5z" fill="#e1e4e7" stroke="#c6cacf"/>`)}</span>`;
  }
}

customElements.define("xl-winbtns", XlWinbtns);
customElements.define("xl-titlebar", XlTitlebar);
customElements.define("xl-tabs", XlTabs);
customElements.define("rb-group", RbGroup);
customElements.define("xl-ribbon", XlRibbon);
customElements.define("xl-formula", XlFormula);
customElements.define("xl-sheet", XlSheet);
customElements.define("xl-panel", XlPanel);
customElements.define("xl-button", XlButton);
customElements.define("xl-sheettabs", XlSheettabs);
customElements.define("xl-status", XlStatus);
customElements.define("xl-ime", XlIme);
</script>
</body>
</html>
